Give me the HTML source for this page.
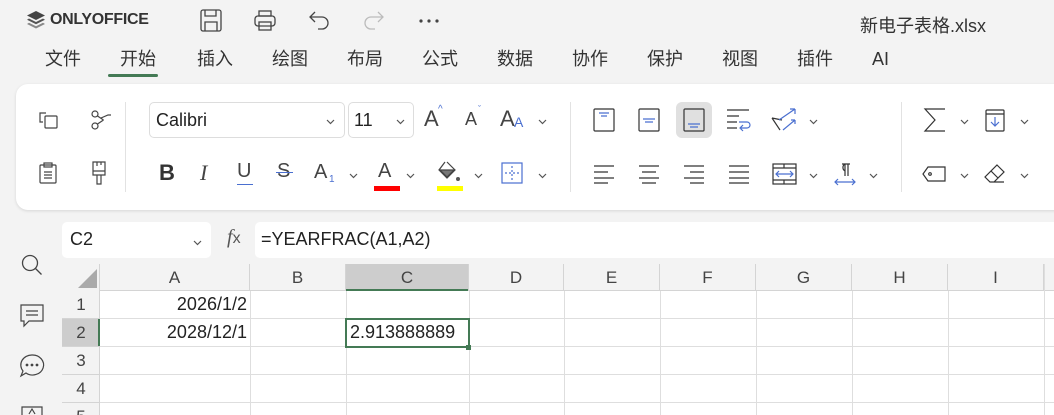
<!DOCTYPE html>
<html><head><meta charset="utf-8"><style>
*{margin:0;padding:0;box-sizing:border-box}
html{width:1054px;height:415px;overflow:hidden}
body{width:1054px;height:415px;overflow:hidden;background:#f3f3f3;font-family:"Liberation Sans","Noto Sans CJK SC",sans-serif;color:#333;position:relative}
.a{position:absolute}
.tab{position:absolute;top:47px;font-size:18px;line-height:24px;color:#333}
svg{position:absolute;overflow:visible}
.cell{position:absolute;font-size:18px;color:#222}
.ch{position:absolute;top:264px;height:27px;font-size:17px;color:#444;text-align:center;line-height:27px;border-right:1px solid #d4d4d4}
.rh{position:absolute;left:62px;width:38px;height:28px;font-size:17px;color:#444;text-align:center;line-height:28px;border-bottom:1px solid #d4d4d4}
</style></head><body>
<svg style="left:26px;top:10px" width="20" height="22" viewBox="0 0 20 22"><path d="M10 1 L19 5.5 L10 10 L1 5.5Z" fill="#444"/><path d="M3 8.5 L10 12 L17 8.5 L19 9.7 L10 14.2 L1 9.7Z" fill="#555"/><path d="M3 12.8 L10 16.3 L17 12.8 L19 14 L10 18.5 L1 14Z" fill="#888"/></svg>
<div class="a" style="left:50px;top:11px;font-size:16px;font-weight:bold;color:#333;letter-spacing:-0.3px">ONLYOFFICE</div>
<svg style="left:200px;top:9px" width="22" height="24" viewBox="0 0 22 24" fill="none" stroke="#444" stroke-width="1.3"><rect x="1" y="1" width="20" height="21" rx="2"/><path d="M5 1v6h11V1M5 22v-9h12v9"/></svg>
<svg style="left:254px;top:10px" width="22" height="22" viewBox="0 0 22 22" fill="none" stroke="#444" stroke-width="1.3"><rect x="5" y="1" width="12" height="5"/><rect x="1" y="6" width="20" height="10" rx="3"/><rect x="5" y="12" width="12" height="8"/></svg>
<svg style="left:309px;top:10px" width="22" height="22" viewBox="0 0 22 22" fill="none" stroke="#444" stroke-width="1.3"><path d="M6 2L1 7l5 5M1 7h12a6 6 0 0 1 0 12H9"/></svg>
<svg style="left:362px;top:10px" width="22" height="22" viewBox="0 0 22 22" fill="none" stroke="#bbb" stroke-width="1.3"><path d="M16 2l5 5-5 5M21 7H9a6 6 0 0 0 0 12h4"/></svg>
<svg style="left:419px;top:19px" width="20" height="4" viewBox="0 0 20 4" fill="#444"><circle cx="2" cy="2" r="1.6"/><circle cx="10" cy="2" r="1.6"/><circle cx="18" cy="2" r="1.6"/></svg>
<div class="a" style="left:860px;top:12px;font-size:18px;color:#333">新电子表格.xlsx</div>
<div class="tab" style="left:45px">文件</div>
<div class="tab" style="left:120px">开始</div>
<div class="a" style="left:108px;top:74px;width:50px;height:3px;border-radius:2px;background:#447a55"></div>
<div class="tab" style="left:197px">插入</div>
<div class="tab" style="left:272px">绘图</div>
<div class="tab" style="left:347px">布局</div>
<div class="tab" style="left:422px">公式</div>
<div class="tab" style="left:497px">数据</div>
<div class="tab" style="left:572px">协作</div>
<div class="tab" style="left:647px">保护</div>
<div class="tab" style="left:722px">视图</div>
<div class="tab" style="left:797px">插件</div>
<div class="a" style="left:872px;top:49px;font-size:18px;color:#333">AI</div>
<div class="a" style="left:16px;top:84px;width:1060px;height:126px;background:#fff;border-radius:12px;box-shadow:0 1px 3px rgba(0,0,0,.12)"></div>
<div class="a" style="left:125px;top:102px;width:1px;height:90px;background:#e2e2e2"></div>
<div class="a" style="left:570px;top:102px;width:1px;height:90px;background:#e2e2e2"></div>
<div class="a" style="left:901px;top:102px;width:1px;height:90px;background:#e2e2e2"></div>
<svg style="left:38px;top:110px" width="20" height="20" viewBox="0 0 20 20" fill="none" stroke="#444" stroke-width="1.2"><path d="M8 3H2v9h3"/><rect x="7" y="6" width="12" height="12" rx="1"/></svg>
<svg style="left:90px;top:110px" width="22" height="20" viewBox="0 0 22 20" fill="none" stroke="#444" stroke-width="1.2"><circle cx="5" cy="4" r="3"/><circle cx="5" cy="16" r="3"/><path d="M7.5 6l6 4M7.5 14l6-4M11 8l7-3h3"/></svg>
<svg style="left:39px;top:162px" width="18" height="22" viewBox="0 0 18 22" fill="none" stroke="#444" stroke-width="1.2"><rect x="1" y="3" width="16" height="18" rx="1"/><rect x="5" y="1" width="8" height="4"/><path d="M5 10h8M5 13h8M5 16h8"/></svg>
<svg style="left:91px;top:161px" width="16" height="25" viewBox="0 0 16 25" fill="none" stroke="#444" stroke-width="1.2"><path d="M2 1h12v13H2zM2 10h12M6 14v9h4v-9M6 1v4M10 1v3"/></svg>
<div class="a" style="left:149px;top:102px;width:196px;height:36px;border:1px solid #ddd;border-radius:5px"></div>
<div class="a" style="left:156px;top:110px;font-size:18px;color:#222">Calibri</div>
<svg style="left:326px;top:119px" width="9" height="5" viewBox="0 0 9 5" fill="none" stroke="#555" stroke-width="1.2"><path d="M1 1l3.5 3.5L8 1"/></svg>
<div class="a" style="left:348px;top:102px;width:66px;height:36px;border:1px solid #ddd;border-radius:5px"></div>
<div class="a" style="left:354px;top:110px;font-size:18px;color:#222">11</div>
<svg style="left:396px;top:119px" width="9" height="5" viewBox="0 0 9 5" fill="none" stroke="#555" stroke-width="1.2"><path d="M1 1l3.5 3.5L8 1"/></svg>
<div class="a" style="left:424px;top:106px;font-size:22px;color:#444;font-weight:300">A</div><div class="a" style="left:438px;top:104px;font-size:10px;color:#4a6fd0">^</div>
<div class="a" style="left:465px;top:109px;font-size:18px;color:#444">A</div><div class="a" style="left:478px;top:104px;font-size:9px;color:#4a6fd0">ˇ</div>
<div class="a" style="left:500px;top:106px;font-size:22px;color:#444">A</div><div class="a" style="left:514px;top:114px;font-size:14px;color:#4a6fd0">A</div>
<svg style="left:538px;top:119px" width="9" height="5" viewBox="0 0 9 5" fill="none" stroke="#555" stroke-width="1.2"><path d="M1 1l3.5 3.5L8 1"/></svg>
<div class="a" style="left:159px;top:160px;font-size:22px;font-weight:bold;color:#333">B</div>
<div class="a" style="left:200px;top:160px;font-size:22px;font-style:italic;color:#444;font-family:'Liberation Serif',serif">I</div>
<div class="a" style="left:237px;top:160px;font-size:20px;color:#444">U</div><div class="a" style="left:237px;top:184px;width:16px;height:1px;background:#4a6fd0"></div>
<div class="a" style="left:277px;top:160px;font-size:20px;color:#444">S</div><div class="a" style="left:276px;top:172px;width:17px;height:1px;background:#4a6fd0"></div>
<div class="a" style="left:314px;top:161px;font-size:20px;color:#444">A</div><div class="a" style="left:329px;top:174px;font-size:10px;color:#4a6fd0">1</div>
<svg style="left:349px;top:173px" width="9" height="5" viewBox="0 0 9 5" fill="none" stroke="#555" stroke-width="1.2"><path d="M1 1l3.5 3.5L8 1"/></svg>
<div class="a" style="left:378px;top:160px;font-size:20px;color:#444">A</div><div class="a" style="left:374px;top:186px;width:26px;height:5px;background:#f00"></div>
<svg style="left:406px;top:173px" width="9" height="5" viewBox="0 0 9 5" fill="none" stroke="#555" stroke-width="1.2"><path d="M1 1l3.5 3.5L8 1"/></svg>
<svg style="left:437px;top:161px" width="26" height="22" viewBox="0 0 26 22" fill="none" stroke="#444" stroke-width="1.2"><path d="M8 1l-6 8 8 8 8-8-8-8"/><path d="M3 9h14l-7 7z" fill="#777"/><circle cx="21" cy="18" r="2" fill="#555" stroke="none"/></svg>
<div class="a" style="left:437px;top:186px;width:26px;height:5px;background:#ff0"></div>
<svg style="left:474px;top:173px" width="9" height="5" viewBox="0 0 9 5" fill="none" stroke="#555" stroke-width="1.2"><path d="M1 1l3.5 3.5L8 1"/></svg>
<svg style="left:501px;top:162px" width="22" height="22" viewBox="0 0 22 22" fill="none" stroke="#4a6fd0" stroke-width="1.2"><rect x="1" y="1" width="20" height="20"/><path d="M11 4v14M4 11h14" stroke-dasharray="2 2"/></svg>
<svg style="left:538px;top:173px" width="9" height="5" viewBox="0 0 9 5" fill="none" stroke="#555" stroke-width="1.2"><path d="M1 1l3.5 3.5L8 1"/></svg>
<svg style="left:593px;top:108px" width="22" height="24" viewBox="0 0 22 24" fill="none" stroke="#333" stroke-width="1.2"><rect x="1" y="1" width="20" height="22" rx="1"/><path d="M6 5h10M8 8h6" stroke="#4a6fd0"/></svg>
<svg style="left:638px;top:108px" width="22" height="24" viewBox="0 0 22 24" fill="none" stroke="#333" stroke-width="1.2"><rect x="1" y="1" width="20" height="22" rx="1"/><path d="M5 11h12M7 14h8" stroke="#4a6fd0"/></svg>
<div class="a" style="left:676px;top:102px;width:36px;height:36px;background:#e0e0e0;border-radius:6px"></div>
<svg style="left:683px;top:108px" width="22" height="24" viewBox="0 0 22 24" fill="none" stroke="#333" stroke-width="1.2"><rect x="1" y="1" width="20" height="22" rx="1"/><path d="M5 16h12M7 19h8" stroke="#4a6fd0"/></svg>
<svg style="left:727px;top:109px" width="24" height="22" viewBox="0 0 24 22" fill="none" stroke="#333" stroke-width="1.2"><path d="M0 1h22M0 7h12M0 13h10M0 19h10"/><path d="M12 13h8a3 3 0 0 1 0 6h-6M16 16l-3 3 3 3" stroke="#4a6fd0"/></svg>
<svg style="left:771px;top:108px" width="28" height="24" viewBox="0 0 28 24" fill="none" stroke="#333" stroke-width="1.2"><path d="M1 10l10 2 M1 10l8 12"/><path d="M8 12l16-11M24 1h-5M24 1v5M12 22l12-10M24 12h-4M24 12v4" stroke="#4a6fd0"/></svg>
<svg style="left:809px;top:119px" width="9" height="5" viewBox="0 0 9 5" fill="none" stroke="#555" stroke-width="1.2"><path d="M1 1l3.5 3.5L8 1"/></svg>
<svg style="left:594px;top:165px" width="20" height="19" viewBox="0 0 20 19" fill="none" stroke="#333" stroke-width="1.2"><path d="M0 1h20M0 7h14M0 13h20M0 18h14"/></svg>
<svg style="left:639px;top:165px" width="20" height="19" viewBox="0 0 20 19" fill="none" stroke="#333" stroke-width="1.2"><path d="M0 1h20M3 7h14M0 13h20M3 18h14"/></svg>
<svg style="left:684px;top:165px" width="20" height="19" viewBox="0 0 20 19" fill="none" stroke="#333" stroke-width="1.2"><path d="M0 1h20M6 7h14M0 13h20M6 18h14"/></svg>
<svg style="left:729px;top:165px" width="20" height="19" viewBox="0 0 20 19" fill="none" stroke="#333" stroke-width="1.2"><path d="M0 1h20M0 7h20M0 13h20M0 18h20"/></svg>
<svg style="left:772px;top:163px" width="25" height="22" viewBox="0 0 25 22" fill="none" stroke="#333" stroke-width="1.2"><rect x="1" y="1" width="23" height="20"/><path d="M1 5h23M1 17h23M12 17v4M12 1v4"/><path d="M4 11h17M7 8l-3 3 3 3M18 8l3 3-3 3" stroke="#4a6fd0"/></svg>
<svg style="left:809px;top:173px" width="9" height="5" viewBox="0 0 9 5" fill="none" stroke="#555" stroke-width="1.2"><path d="M1 1l3.5 3.5L8 1"/></svg>
<svg style="left:834px;top:163px" width="22" height="22" viewBox="0 0 22 22" fill="none" stroke="#333" stroke-width="1.2"><path d="M8 1h8M11 1v12M14 1v12M11 1a4 4 0 0 0 0 7"/><path d="M1 19h20M4 16l-3 3 3 3M18 16l3 3-3 3" stroke="#4a6fd0"/></svg>
<svg style="left:869px;top:173px" width="9" height="5" viewBox="0 0 9 5" fill="none" stroke="#555" stroke-width="1.2"><path d="M1 1l3.5 3.5L8 1"/></svg>
<svg style="left:924px;top:108px" width="22" height="24" viewBox="0 0 22 24" fill="none" stroke="#333" stroke-width="1.2"><path d="M21 1H1l10 11L1 23h20"/></svg>
<svg style="left:960px;top:119px" width="9" height="5" viewBox="0 0 9 5" fill="none" stroke="#555" stroke-width="1.2"><path d="M1 1l3.5 3.5L8 1"/></svg>
<svg style="left:985px;top:109px" width="20" height="23" viewBox="0 0 20 23" fill="none" stroke="#333" stroke-width="1.2"><rect x="1" y="1" width="18" height="21" rx="1"/><path d="M1 5h18"/><path d="M10 8v9M6 13l4 4 4-4" stroke="#4a6fd0"/></svg>
<svg style="left:1020px;top:119px" width="9" height="5" viewBox="0 0 9 5" fill="none" stroke="#555" stroke-width="1.2"><path d="M1 1l3.5 3.5L8 1"/></svg>
<svg style="left:922px;top:166px" width="24" height="16" viewBox="0 0 24 16" fill="none" stroke="#333" stroke-width="1.2"><path d="M6 1h17v14H6L1 8z"/><circle cx="8" cy="8" r="1.3"/></svg>
<svg style="left:960px;top:173px" width="9" height="5" viewBox="0 0 9 5" fill="none" stroke="#555" stroke-width="1.2"><path d="M1 1l3.5 3.5L8 1"/></svg>
<svg style="left:984px;top:164px" width="22" height="20" viewBox="0 0 22 20" fill="none" stroke="#333" stroke-width="1.2"><path d="M13 1l7 7-10 10H6L1 13zM7 7l7 7M6 18h14"/></svg>
<svg style="left:1020px;top:173px" width="9" height="5" viewBox="0 0 9 5" fill="none" stroke="#555" stroke-width="1.2"><path d="M1 1l3.5 3.5L8 1"/></svg>
<svg style="left:21px;top:254px" width="22" height="22" viewBox="0 0 22 22" fill="none" stroke="#444" stroke-width="1.3"><circle cx="9" cy="9" r="7.5"/><path d="M14.5 14.5l6 6"/></svg>
<svg style="left:20px;top:304px" width="24" height="24" viewBox="0 0 24 24" fill="none" stroke="#444" stroke-width="1.2"><path d="M1 1h22v16H9l-5 5v-5H1z"/><path d="M6 7h12M6 11h12"/></svg>
<svg style="left:20px;top:354px" width="24" height="24" viewBox="0 0 24 24" fill="none" stroke="#444" stroke-width="1.2"><path d="M12 1a11 10 0 1 1-6 18l-5 3 2-5A11 10 0 0 1 12 1z"/><circle cx="7" cy="11" r=".8" fill="#444"/><circle cx="12" cy="11" r=".8" fill="#444"/><circle cx="17" cy="11" r=".8" fill="#444"/></svg>
<svg style="left:21px;top:406px" width="22" height="9" viewBox="0 0 22 9" fill="none" stroke="#444" stroke-width="1.2"><path d="M1 9V1h20v8M8 8l3-5 3 5"/></svg>
<div class="a" style="left:62px;top:222px;width:149px;height:36px;background:#fff;border-radius:5px"></div>
<div class="a" style="left:70px;top:229px;font-size:18px;color:#222">C2</div>
<svg style="left:193px;top:240px" width="9" height="5" viewBox="0 0 9 5" fill="none" stroke="#555" stroke-width="1.2"><path d="M1 1l3.5 3.5L8 1"/></svg>
<div class="a" style="left:227px;top:226px;font-size:20px;color:#555;font-style:italic;font-family:'Liberation Serif',serif">f<span style="font-style:normal;font-family:'Liberation Sans';font-size:16px">x</span></div>
<div class="a" style="left:255px;top:222px;width:820px;height:36px;background:#fff;border-radius:5px"></div>
<div class="a" style="left:261px;top:229px;font-size:18px;color:#222">=YEARFRAC(A1,A2)</div>
<div class="a" style="left:62px;top:264px;width:992px;height:151px;background:#fff"></div>
<div class="a" style="left:62px;top:264px;width:992px;height:27px;background:#f3f3f3;border-bottom:1px solid #d4d4d4"></div>
<div class="a" style="left:62px;top:264px;width:38px;height:151px;background:#f3f3f3;border-right:1px solid #d4d4d4"></div>
<svg style="left:78px;top:269px" width="19" height="19" viewBox="0 0 19 19"><path d="M19 0v19H0z" fill="#aaa"/></svg>
<div class="a" style="left:346px;top:264px;width:123px;height:27px;background:#cdcdcd;border-bottom:2px solid #447a55"></div>
<div class="a" style="left:62px;top:319px;width:38px;height:28px;background:#cdcdcd;border-right:2px solid #447a55"></div>
<div class="ch" style="left:100px;width:150px">A</div>
<div class="ch" style="left:250px;width:96px">B</div>
<div class="ch" style="left:346px;width:123px">C</div>
<div class="ch" style="left:469px;width:95px">D</div>
<div class="ch" style="left:564px;width:96px">E</div>
<div class="ch" style="left:660px;width:96px">F</div>
<div class="ch" style="left:756px;width:96px">G</div>
<div class="ch" style="left:852px;width:96px">H</div>
<div class="ch" style="left:948px;width:96px">I</div>
<div class="rh" style="top:291px">1</div>
<div class="rh" style="top:319px">2</div>
<div class="rh" style="top:347px">3</div>
<div class="rh" style="top:375px">4</div>
<div class="rh" style="top:403px;border-bottom:none">5</div>
<div class="a" style="left:100px;top:318px;width:954px;height:1px;background:#dedede"></div>
<div class="a" style="left:100px;top:346px;width:954px;height:1px;background:#dedede"></div>
<div class="a" style="left:100px;top:374px;width:954px;height:1px;background:#dedede"></div>
<div class="a" style="left:100px;top:402px;width:954px;height:1px;background:#dedede"></div>
<div class="a" style="left:250px;top:291px;width:1px;height:124px;background:#dedede"></div>
<div class="a" style="left:346px;top:291px;width:1px;height:124px;background:#dedede"></div>
<div class="a" style="left:469px;top:291px;width:1px;height:124px;background:#dedede"></div>
<div class="a" style="left:564px;top:291px;width:1px;height:124px;background:#dedede"></div>
<div class="a" style="left:660px;top:291px;width:1px;height:124px;background:#dedede"></div>
<div class="a" style="left:756px;top:291px;width:1px;height:124px;background:#dedede"></div>
<div class="a" style="left:852px;top:291px;width:1px;height:124px;background:#dedede"></div>
<div class="a" style="left:948px;top:291px;width:1px;height:124px;background:#dedede"></div>
<div class="a" style="left:1044px;top:264px;width:1px;height:151px;background:#dedede"></div>
<div class="cell" style="left:100px;top:294px;width:147px;text-align:right">2026/1/2</div>
<div class="cell" style="left:100px;top:322px;width:147px;text-align:right">2028/12/1</div>
<div class="a" style="left:345px;top:318px;width:125px;height:30px;border:2px solid #447a55"></div>
<div class="a" style="left:466px;top:345px;width:5px;height:5px;background:#447a55"></div>
<div class="cell" style="left:350px;top:322px">2.913888889</div>
</body></html>
